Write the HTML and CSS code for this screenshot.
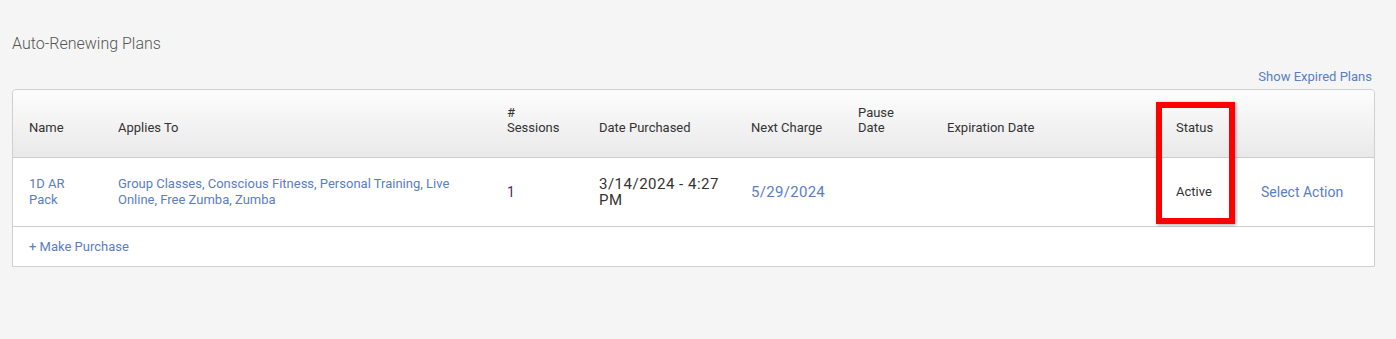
FILE: index.html
```html
<!DOCTYPE html>
<html lang="en">
<head>
  <meta charset="UTF-8">
  <title>Auto-Renewing Plans</title>
  <link rel="stylesheet" href="styles.css">
</head>
<body>
  <div class="page">
    <h2 class="section-title">Auto-Renewing Plans</h2>
    <div class="toolbar">
      <a href="#" class="link">Show Expired Plans</a>
    </div>
    <div class="plans">
      <table class="plans-table">
        <colgroup>
          <col style="width:89px">
          <col style="width:389px">
          <col style="width:92px">
          <col style="width:152px">
          <col style="width:107px">
          <col style="width:89px">
          <col style="width:229px">
          <col style="width:85px">
          <col style="width:129px">
        </colgroup>
        <thead>
          <tr>
            <th>Name</th>
            <th>Applies To</th>
            <th>#<br>Sessions</th>
            <th>Date Purchased</th>
            <th>Next Charge</th>
            <th>Pause<br>Date</th>
            <th>Expiration Date</th>
            <th>Status</th>
            <th></th>
          </tr>
        </thead>
        <tbody>
          <tr class="plan-row">
            <td><a href="#" class="link">1D AR Pack</a></td>
            <td><a href="#" class="link">Group Classes, Conscious Fitness, Personal Training, Live Online, Free Zumba, Zumba</a></td>
            <td class="sessions">1</td>
            <td class="date">3/14/2024 - 4:27 PM</td>
            <td><a href="#" class="link date-link">5/29/2024</a></td>
            <td></td>
            <td></td>
            <td class="status">Active</td>
            <td><a href="#" class="link action">Select Action</a></td>
          </tr>
          <tr class="footer-row">
            <td colspan="9"><a href="#" class="link">+ Make Purchase</a></td>
          </tr>
        </tbody>
      </table>
      <div class="highlight"></div>
    </div>
  </div>
</body>
</html>
```

FILE: styles.css
```css
body {
  margin: 0;
  background: #f5f5f5;
  font-family: Roboto, "Noto Sans", sans-serif;
  color: #333;
}
.page { padding: 34px 21px 0 12px; }
.section-title {
  margin: 0;
  font-size: 16px;
  font-weight: 300;
  color: #555;
  line-height: 20px;
}
.toolbar {
  display: flex;
  justify-content: flex-end;
  margin-top: 13px;
  padding-right: 3px;
  line-height: 20px;
  font-size: 13px;
}
.link { color: #5a7ec2; text-decoration: none; }
.plans {
  position: relative;
  margin-top: 2px;
  width: 1361px;
  border: 1px solid #cfcfcf;
  border-radius: 4px 4px 0 0;
  background: #fff;
}
.plans-table {
  width: 100%;
  border-collapse: collapse;
  table-layout: fixed;
  font-size: 13px;
}
.plans-table th {
  text-align: left;
  font-weight: 400;
  vertical-align: bottom;
  height: 45px;
  padding: 0 8px 22px 16px;
  line-height: 15px;
  color: #333;
  background: linear-gradient(#fdfdfd, #e9e9e9);
  border-bottom: 1px solid #cdcdcd;
}
.plans-table th:first-child { border-top-left-radius: 4px; }
.plans-table th:last-child { border-top-right-radius: 4px; }
.plan-row td {
  height: 68px;
  padding: 0 8px 0 16px;
  line-height: 16px;
  vertical-align: middle;
  border-bottom: 1px solid #cdcdcd;
}
.sessions { color: #4b2c6b; font-size: 14px; }
.date { font-size: 15px; letter-spacing: 0.5px; color: #333; }
.date-link { font-size: 15px; letter-spacing: 0.3px; }
.status { color: #333; }
.action { font-size: 14px; }
.footer-row td {
  height: 39px;
  padding: 0 16px;
  vertical-align: middle;
}
.highlight {
  position: absolute;
  left: 1143px;
  top: 12px;
  width: 67px;
  height: 110px;
  border: 6px solid #f00;
  box-shadow: 1px 1px 3px rgba(0,0,0,0.35);
}
```
